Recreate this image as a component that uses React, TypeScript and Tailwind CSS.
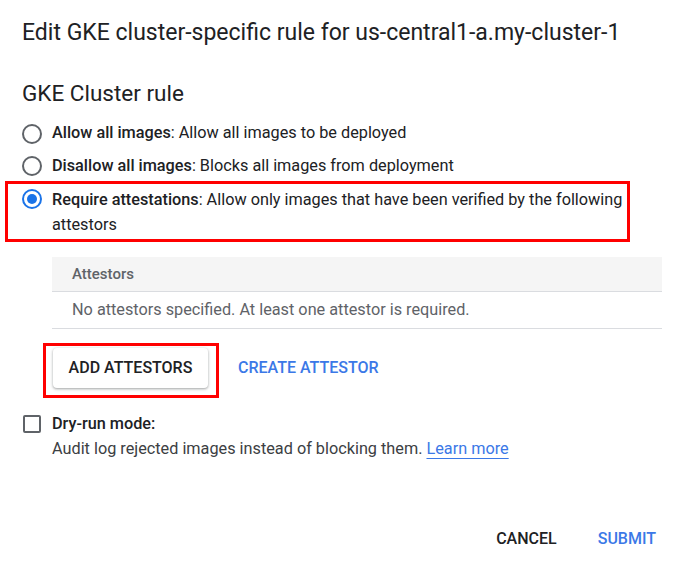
import React from 'react';

const font = { fontFamily: 'Roboto, "Liberation Sans", sans-serif' };

function Radio({ checked }: { checked?: boolean }) {
  return (
    <span
      className={
        'flex h-[20px] w-[20px] shrink-0 items-center justify-center rounded-full border-2 ' +
        (checked ? 'border-[#1a73e8]' : 'border-[#5f6368]')
      }
    >
      {checked && <span className="h-[10px] w-[10px] rounded-full bg-[#1a73e8]" />}
    </span>
  );
}

export default function App() {
  return (
    <div className="h-[568px] w-[679px] bg-white text-[#202124]" style={font}>
      <div className="px-[22px] pt-[20px]">
        <h1 className="text-[23px] leading-[26px] font-normal">
          Edit GKE cluster-specific rule for us-central1-a.my-cluster-1
        </h1>
        <h2 className="mt-[34px] text-[22.5px] leading-[26px] font-normal">GKE Cluster rule</h2>
      </div>

      <div className="mt-[11px] flex flex-col">
        <label className="flex h-[33px] items-center gap-[10px] pl-[22px]">
          <Radio />
          <span className="text-[16.25px]">
            <span className="font-medium">Allow all images</span>: Allow all images to be deployed
          </span>
        </label>
        <label className="flex h-[32px] items-center gap-[10px] pl-[22px]">
          <Radio />
          <span className="text-[16.25px]">
            <span className="font-medium">Disallow all images</span>: Blocks all images from deployment
          </span>
        </label>
        <div className="-mt-[1px] ml-[5px] w-[625px] border-[3px] border-[#ff0000] pt-[3px] pb-[2px] pl-[14px]">
          <div className="flex items-start gap-[10px]">
            <div className="pt-[2px]">
              <Radio checked />
            </div>
            <span className="pr-[4px] text-[16.25px] leading-[25px]">
              <span className="font-medium">Require attestations</span>: Allow only images that have been verified by the following attestors
            </span>
          </div>
        </div>
      </div>

      <div className="mt-[15px] ml-[52px] mr-[17px]">
        <div className="flex h-[35px] items-center border-b border-[#dadce0] bg-[#f5f5f5] px-[20px] text-[15px] font-medium text-[#5f6368]">
          Attestors
        </div>
        <div className="flex h-[37px] items-center border-b border-[#dadce0] px-[20px] text-[16.25px] text-[#5f6368]">
          No attestors specified. At least one attestor is required.
        </div>
      </div>

      <div className="mt-[14px] ml-[43px] flex items-start">
        <div className="border-[3px] border-[#ff0000] pt-[2px] pr-[8px] pb-[7px] pl-[7px]">
          <button className="h-[40px] w-[155px] rounded-[4px] bg-white text-[16px] font-medium text-[#202124] shadow-[0_1px_2px_rgba(60,64,67,0.3),0_1px_3px_1px_rgba(60,64,67,0.15)]">
            ADD ATTESTORS
          </button>
        </div>
        <button className="mt-[5px] ml-[19px] flex h-[40px] items-center text-[16px] font-medium text-[#3b78e7]">
          CREATE ATTESTOR
        </button>
      </div>

      <div className="mt-[13px] flex items-start gap-[11px] pl-[23px]">
        <span className="mt-[4px] h-[18px] w-[18px] shrink-0 rounded-[2px] border-2 border-[#5f6368]" />
        <div className="text-[16.25px] leading-[25px]">
          <div className="font-medium">Dry-run mode:</div>
          <div className="text-[#3c4043]">
            Audit log rejected images instead of blocking them.{' '}
            <a className="text-[#3b78e7] underline underline-offset-[4px]">Learn more</a>
          </div>
        </div>
      </div>

      <div className="mt-[66px] flex justify-end gap-[41px] pr-[23px] leading-[24px]">
        <button className="text-[16px] font-medium text-[#202124]">CANCEL</button>
        <button className="text-[16px] font-medium text-[#3b78e7]">SUBMIT</button>
      </div>
    </div>
  );
}
